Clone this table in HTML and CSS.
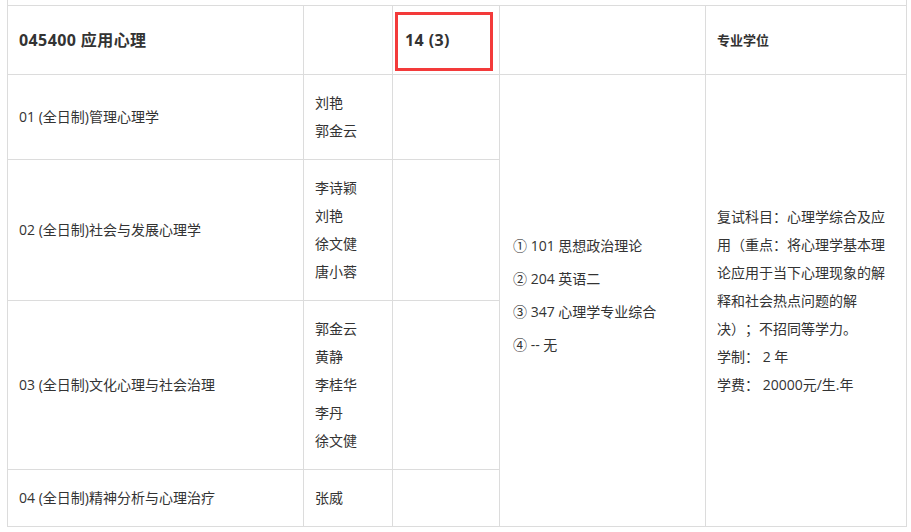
FILE: index.html
```html
<!DOCTYPE html>
<html lang="zh-CN">
<head>
<meta charset="utf-8">
<title>045400 应用心理</title>
<link rel="stylesheet" href="styles.css">
</head>
<body>
<div class="wrap">
<table class="plan">
  <colgroup>
    <col class="c1"><col class="c2"><col class="c3"><col class="c4"><col class="c5">
  </colgroup>
  <tr class="prev"><td colspan="5"></td></tr>
  <tr class="head">
    <td class="title">045400 应用心理</td>
    <td></td>
    <td class="count"><span class="mark"></span>14 (3)</td>
    <td></td>
    <td class="degree">专业学位</td>
  </tr>
  <tr>
    <td>01 (全日制)管理心理学</td>
    <td>刘艳<br>郭金云</td>
    <td></td>
    <td rowspan="4" class="exam">
      <div class="exam-list">
        <div>① 101 思想政治理论</div>
        <div>② 204 英语二</div>
        <div>③ 347 心理学专业综合</div>
        <div>④ -- 无</div>
      </div>
    </td>
    <td rowspan="4" class="note">复试科目：心理学综合及应用（重点：将心理学基本理论应用于当下心理现象的解释和社会热点问题的解决）；不招同等学力。<br>学制： 2 年<br>学费： 20000元/生.年</td>
  </tr>
  <tr>
    <td>02 (全日制)社会与发展心理学</td>
    <td>李诗颖<br>刘艳<br>徐文健<br>唐小蓉</td>
    <td></td>
  </tr>
  <tr>
    <td>03 (全日制)文化心理与社会治理</td>
    <td>郭金云<br>黄静<br>李桂华<br>李丹<br>徐文健</td>
    <td></td>
  </tr>
  <tr>
    <td>04 (全日制)精神分析与心理治疗</td>
    <td>张威</td>
    <td></td>
  </tr>
</table>
</div>
</body>
</html>
```

FILE: styles.css
```css
html, body {
  margin: 0;
  padding: 0;
  background: #fff;
}
.wrap {
  padding: 0 4px 0 7px;
  overflow: hidden;
  height: 532px;
}
.plan {
  border-collapse: collapse;
  table-layout: fixed;
  width: 900px;
  margin-top: -1px;
  font-family: "Open Sans", "Noto Sans CJK SC", sans-serif;
  font-size: 14px;
  line-height: 28px;
  color: #333;
  text-spacing-trim: space-all;
}
.c1 { width: 296px; }
.c2 { width: 89px; }
.c3 { width: 107px; }
.c4 { width: 206px; }
.c5 { width: 201px; }
.plan td {
  border: 1px solid #dcdcdc;
  padding: 14px 11px;
  vertical-align: middle;
}
.plan tr.prev td {
  height: 5px;
  padding: 0;
}
.plan tr.head td {
  height: 69px;
  padding-top: 0;
  padding-bottom: 0;
  box-sizing: border-box;
}
.title, .count {
  font-weight: 700;
  font-size: 16px;
  letter-spacing: 0.4px;
}
.count {
  position: relative;
  padding-left: 12px !important;
}
.degree {
  font-weight: 700;
  font-size: 13px;
}
.mark {
  position: absolute;
  left: 2px;
  top: 6px;
  width: 92px;
  height: 53px;
  border: 3px solid #f33a3a;
}
.exam {
  padding-left: 13px !important;
}
.exam-list {
  line-height: 33px;
  padding-bottom: 12px;
}
.note {
  padding-left: 11px;
  padding-right: 14px;
}
```
